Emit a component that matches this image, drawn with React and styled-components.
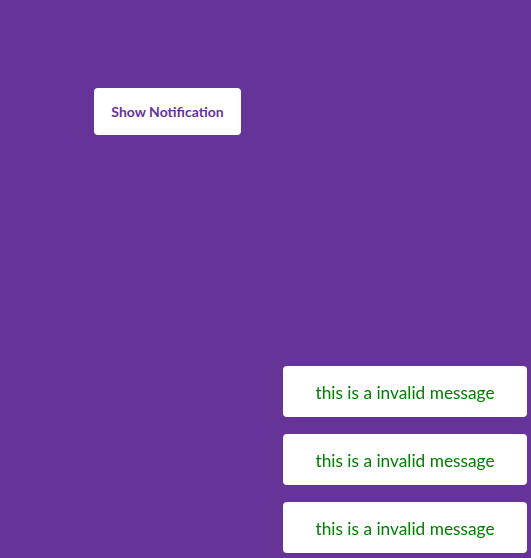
import React from "react";
import styled, { createGlobalStyle } from "styled-components";

const GlobalStyle = createGlobalStyle`
  html, body {
    margin: 0;
    padding: 0;
    background: #663399;
    font-family: Lato, "Open Sans", sans-serif;
  }
  body {
    min-height: 558px;
  }
`;

const Page = styled.div`
  padding: 88px 0 0 94px;
`;

const ShowButton = styled.button`
  width: 147px;
  height: 47px;
  border: none;
  border-radius: 4px;
  background: #ffffff;
  color: #663399;
  font-family: Lato, "Open Sans", sans-serif;
  font-size: 14px;
  font-weight: 700;
  cursor: pointer;
`;

const ToastStack = styled.div`
  position: fixed;
  right: 4px;
  bottom: 5px;
  display: flex;
  flex-direction: column;
  gap: 17px;
`;

const Toast = styled.div`
  width: 244px;
  height: 51px;
  box-sizing: border-box;
  display: flex;
  align-items: center;
  justify-content: center;
  background: #ffffff;
  border-radius: 4px;
  color: ${(p) => (p.type === "invalid" ? "#008000" : "#663399")};
  font-size: 17.3px;
  padding-top: 1px;
`;

const messages = [
  { id: 1, text: "this is a invalid message", type: "invalid" },
  { id: 2, text: "this is a invalid message", type: "invalid" },
  { id: 3, text: "this is a invalid message", type: "invalid" },
];

export default function App() {
  return (
    <>
      <GlobalStyle />
      <Page>
        <ShowButton>Show Notification</ShowButton>
      </Page>
      <ToastStack>
        {messages.map((m) => (
          <Toast key={m.id} type={m.type}>
            {m.text}
          </Toast>
        ))}
      </ToastStack>
    </>
  );
}
